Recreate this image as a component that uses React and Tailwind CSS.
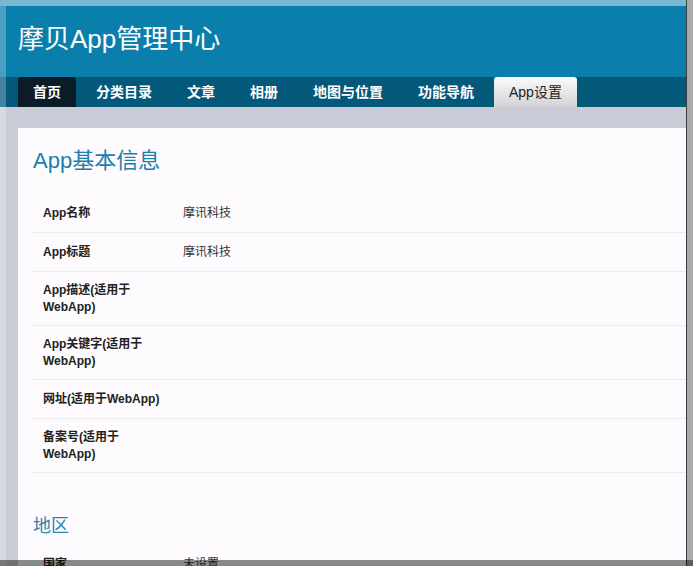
import React from "react";

const tabs = ["首页", "分类目录", "文章", "相册", "地图与位置", "功能导航", "App设置"];

const rows = [
  { label: "App名称", value: "摩讯科技", h: "h-[39px]" },
  { label: "App标题", value: "摩讯科技", h: "h-[39px]" },
  { label: "App描述(适用于WebApp)", value: "", h: "h-[54px]" },
  { label: "App关键字(适用于WebApp)", value: "", h: "h-[54px]" },
  { label: "网址(适用于WebApp)", value: "", h: "h-[39px]" },
  { label: "备案号(适用于WebApp)", value: "", h: "h-[54px]" },
];

function Row({ label, value, h }) {
  return (
    <div className={`flex items-center border-b border-[#ede9ed] ${h}`}>
      <div className="w-[140px] shrink-0 px-[10px] text-[12px] leading-[17px] font-bold text-[#222]">
        {label}
      </div>
      <div className="pl-[10px] text-[12px] leading-[17px] text-[#333]">{value}</div>
    </div>
  );
}

export default function App() {
  return (
    <div className="relative w-[693px] h-[566px] overflow-hidden bg-[#c9ccd6] font-['Liberation_Sans','Noto_Sans_CJK_SC',sans-serif]">
      <header className="bg-[#0b7fac] pt-[6px]">
        <div className="h-[71px] pl-[18px] pt-[18px] text-[26px] leading-[30px] text-white">
          摩贝App管理中心
        </div>
        <nav className="flex h-[30px] gap-[5px] bg-[#04597b] pl-[18px]">
          {tabs.map((t, i) => {
            const base = "flex h-[30px] items-center rounded-t-[3px] px-[15px] text-[14px]";
            if (i === 0)
              return (
                <div key={t} className={`${base} bg-[#0c1b28] font-bold text-white`}>
                  {t}
                </div>
              );
            if (t === "App设置")
              return (
                <div key={t} className={`${base} bg-gradient-to-b from-[#fbfbfb] to-[#d3d3d6] text-[#222]`}>
                  {t}
                </div>
              );
            return (
              <div key={t} className={`${base} font-bold text-white`}>
                {t}
              </div>
            );
          })}
        </nav>
      </header>

      <main className="pl-[18px] pt-[21px]">
        <section className="bg-[#fdfbfd] pl-[15px] pt-[21px] pb-[20px]">
          <h2 className="mb-[21px] text-[22px] leading-[24px] text-[#1b7eab]">App基本信息</h2>
          <div>
            {rows.map((r) => (
              <Row key={r.label} {...r} />
            ))}
          </div>
          <h2 className="mt-[43px] mb-[9px] text-[18px] leading-[20px] text-[#2a86b0]">地区</h2>
          <div>
            <Row label="国家" value="未设置" h="h-[39px]" />
          </div>
        </section>
      </main>

      {/* screenshot frame edges */}
      <div className="absolute left-0 right-0 top-0 h-[6px] bg-white/45" />
      <div className="absolute left-0 top-[6px] bottom-0 w-[6px] bg-white/25" />
      <div className="absolute right-0 top-0 bottom-0 w-[7px] border-l border-[#3a3f44] bg-[#a9a9ad]" />
      <div className="absolute left-0 right-0 bottom-0 h-[6px] bg-black/45" />
    </div>
  );
}
